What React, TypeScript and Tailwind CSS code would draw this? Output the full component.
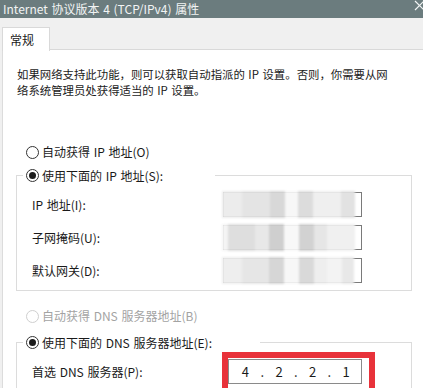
import React from "react";

const font = { fontFamily: '"Noto Sans CJK SC", "Noto Sans", sans-serif' };

function Radio({ checked, disabled }: { checked?: boolean; disabled?: boolean }) {
  return (
    <span
      className={
        "flex size-[13px] shrink-0 items-center justify-center rounded-full border bg-white " +
        (disabled ? "border-[#cfcfcf]" : "border-[#333333]")
      }
    >
      {checked ? <span className="size-[7px] rounded-full bg-[#1c1c1c]" /> : null}
    </span>
  );
}

function Mosaic({ blocks }: { blocks: [string, string][] }) {
  return (
    <div className="pointer-events-none absolute -left-[2px] -top-[2px] -bottom-[2px] right-[3px] flex blur-[1.2px]">
      {blocks.map(([w, c], i) => (
        <div key={i} className={w + " h-full " + c} />
      ))}
    </div>
  );
}

function BlurInput({ blocks }: { blocks: [string, string][] }) {
  return (
    <div className="relative h-[25px] w-[139px] border border-[#7a7a7a] bg-white">
      <Mosaic blocks={blocks} />
    </div>
  );
}

const row1: [string, string][] = [
  ["w-[20px]", "bg-[#ececec]"],
  ["w-[28px]", "bg-[#e4e4e4]"],
  ["w-[15px]", "bg-[#d8d8d8]"],
  ["w-[13px]", "bg-[#f7f7f7]"],
  ["w-[15px]", "bg-[#dcdcdc]"],
  ["w-[28px]", "bg-[#efefef]"],
  ["w-[14px]", "bg-[#e2e2e2]"],
];
const row2: [string, string][] = [
  ["w-[6px]", "bg-[#f4f4f4]"],
  ["w-[27px]", "bg-[#dedede]"],
  ["w-[14px]", "bg-[#e8e8e8]"],
  ["w-[15px]", "bg-[#cfcfcf]"],
  ["w-[15px]", "bg-[#f8f8f8]"],
  ["w-[15px]", "bg-[#d2d2d2]"],
  ["w-[13px]", "bg-[#e6e6e6]"],
  ["w-[28px]", "bg-[#f0f0f0]"],
];
const row3: [string, string][] = [
  ["w-[20px]", "bg-[#eeeeee]"],
  ["w-[27px]", "bg-[#e6e6e6]"],
  ["w-[15px]", "bg-[#d6d6d6]"],
  ["w-[15px]", "bg-[#f7f7f7]"],
  ["w-[15px]", "bg-[#d9d9d9]"],
  ["w-[13px]", "bg-[#eeeeee]"],
  ["w-[15px]", "bg-[#f3f3f3]"],
  ["w-[12px]", "bg-[#e8e8e8]"],
];

const dns = ["4", ".", "2", ".", "2", ".", "1"];

export default function App() {
  return (
    <div
      className="flex h-[388px] w-[423px] flex-col overflow-hidden bg-[#f0f0f0] text-[12px] text-[#1a1a1a] [word-spacing:1px]"
      style={font}
    >
      {/* title bar */}
      <div className="flex h-[18px] shrink-0 items-center justify-between bg-[#6b7c7e] pb-[1px] pl-[3px] pr-[2px] text-[12px] leading-none text-[#f2f4f4]">
        <span className="whitespace-nowrap">Internet 协议版本 4 (TCP/IPv4) 属性</span>
        <svg width="11" height="11" viewBox="0 0 11 11" className="-mr-[4px] -mt-[6px]">
          <path d="M1 1 L10 10 M10 1 L1 10" stroke="#f2f4f4" strokeWidth="1.2" />
        </svg>
      </div>

      {/* tab strip */}
      <div className="flex h-[32px] shrink-0 items-end pl-[2px]">
        <div className="relative z-10 -mb-[1px] flex h-[24px] w-[48px] items-center border border-b-0 border-[#d9d9d9] bg-white pl-[7px]">
          常规
        </div>
        <div className="flex-1 border-b border-[#d9d9d9]" />
      </div>

      {/* panel */}
      <div className="ml-[2px] flex flex-1 flex-col border-l border-[#dcdcdc] bg-white">
        <div className="mt-[16px] pl-[14px] text-[11.4px] leading-[16px] whitespace-nowrap">
          <div>如果网络支持此功能，则可以获取自动指派的 IP 设置。否则，你需要从网</div>
          <div>络系统管理员处获得适当的 IP 设置。</div>
        </div>

        <div className="ml-[23px] mt-[46px] flex h-[16px] items-center gap-[3px] whitespace-nowrap">
          <Radio />
          <span>自动获得 IP 地址(O)</span>
        </div>

        {/* group 1 */}
        <div className="ml-[13px] mt-[15px] w-[396px] border border-[#dcdcdc] pb-[7px]">
          <div className="-mt-[9px] ml-[6px] flex h-[17px] w-[192px] items-center gap-[3px] bg-white pl-[3px] whitespace-nowrap">
            <Radio checked />
            <span>使用下面的 IP 地址(S):</span>
          </div>
          <div className="mt-[8px] flex flex-col gap-[8px] pl-[15px]">
            <div className="flex items-center">
              <span className="w-[191px]">IP 地址(I):</span>
              <BlurInput blocks={row1} />
            </div>
            <div className="flex items-center">
              <span className="w-[191px]">子网掩码(U):</span>
              <BlurInput blocks={row2} />
            </div>
            <div className="flex items-center">
              <span className="w-[191px]">默认网关(D):</span>
              <BlurInput blocks={row3} />
            </div>
          </div>
        </div>

        <div className="ml-[23px] mt-[17px] flex h-[16px] items-center gap-[3px] whitespace-nowrap text-[#a3a3a3]">
          <Radio disabled />
          <span>自动获得 DNS 服务器地址(B)</span>
        </div>

        {/* group 2 */}
        <div className="ml-[13px] mt-[18px] w-[396px] flex-1 border border-b-0 border-[#dcdcdc]">
          <div className="-mt-[9px] ml-[6px] flex h-[17px] w-[237px] items-center gap-[3px] bg-white pl-[3px] whitespace-nowrap">
            <Radio checked />
            <span>使用下面的 DNS 服务器地址(E):</span>
          </div>
          <div className="mt-[1px] flex items-start pl-[15px]">
            <span className="mt-[11px] w-[190px] whitespace-nowrap">首选 DNS 服务器(P):</span>
            <div className="border-[6px] border-b-0 border-[#e8323a] pb-[10px] pr-[7px] pt-[1px]">
              <div className="flex h-[25px] w-[134px] items-center border border-[#8a8a8a] bg-white pl-[8px] text-[13px]">
                {dns.map((d, i) => (
                  <span key={i} className="w-[16.8px] text-center">
                    {d}
                  </span>
                ))}
              </div>
            </div>
          </div>
        </div>
      </div>
    </div>
  );
}
